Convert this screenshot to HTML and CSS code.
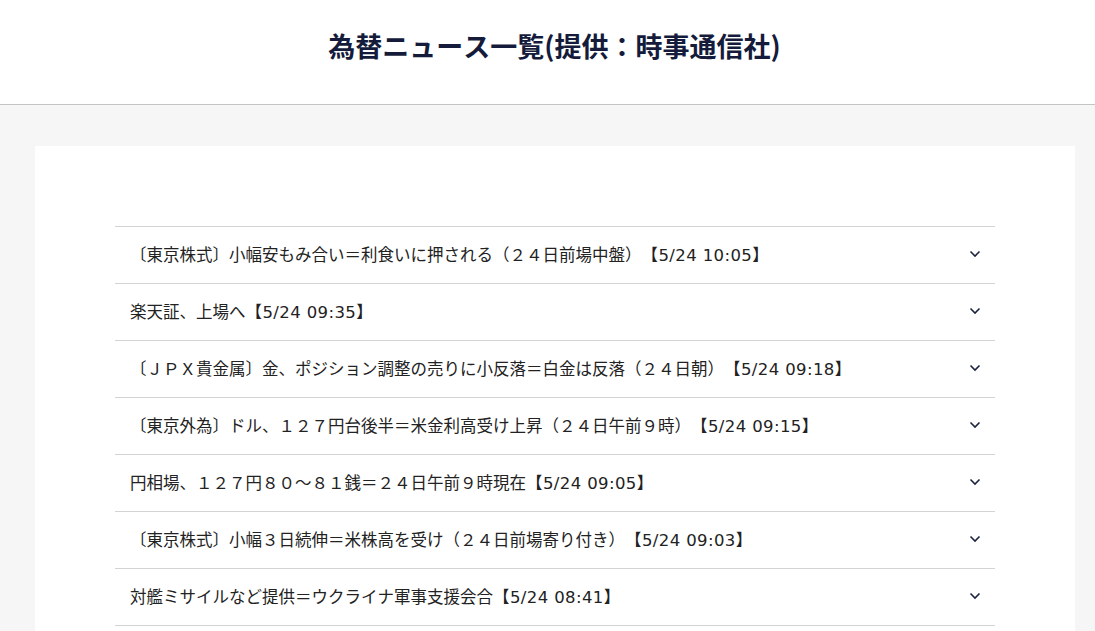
FILE: index.html
```html
<!DOCTYPE html>
<html lang="ja">
<head>
  <meta charset="UTF-8">
  <meta name="viewport" content="width=device-width, initial-scale=1.0">
  <title>為替ニュース一覧</title>
  <link rel="stylesheet" href="styles.css">
</head>
<body>
<header class="page-header">
  <h1>為替ニュース一覧(提供：時事通信社)</h1>
</header>

<main class="content">
  <section class="card">
    <ul class="news-list">
      <li class="news-item"><span>〔東京株式〕小幅安もみ合い＝利食いに押される（２４日前場中盤）<span class="stamp">【5/24 10:05】</span></span><svg class="chevron" viewBox="0 0 12 8"><path d="M1.5 1.5 6 6l4.5-4.5"/></svg></li>
      <li class="news-item"><span>楽天証、上場へ<span class="stamp">【5/24 09:35】</span></span><svg class="chevron" viewBox="0 0 12 8"><path d="M1.5 1.5 6 6l4.5-4.5"/></svg></li>
      <li class="news-item"><span>〔ＪＰＸ貴金属〕金、ポジション調整の売りに小反落＝白金は反落（２４日朝）<span class="stamp">【5/24 09:18】</span></span><svg class="chevron" viewBox="0 0 12 8"><path d="M1.5 1.5 6 6l4.5-4.5"/></svg></li>
      <li class="news-item"><span>〔東京外為〕ドル、１２７円台後半＝米金利高受け上昇（２４日午前９時）<span class="stamp">【5/24 09:15】</span></span><svg class="chevron" viewBox="0 0 12 8"><path d="M1.5 1.5 6 6l4.5-4.5"/></svg></li>
      <li class="news-item"><span>円相場、１２７円８０～８１銭＝２４日午前９時現在<span class="stamp">【5/24 09:05】</span></span><svg class="chevron" viewBox="0 0 12 8"><path d="M1.5 1.5 6 6l4.5-4.5"/></svg></li>
      <li class="news-item"><span>〔東京株式〕小幅３日続伸＝米株高を受け（２４日前場寄り付き）<span class="stamp">【5/24 09:03】</span></span><svg class="chevron" viewBox="0 0 12 8"><path d="M1.5 1.5 6 6l4.5-4.5"/></svg></li>
      <li class="news-item"><span>対艦ミサイルなど提供＝ウクライナ軍事支援会合<span class="stamp">【5/24 08:41】</span></span><svg class="chevron" viewBox="0 0 12 8"><path d="M1.5 1.5 6 6l4.5-4.5"/></svg></li>
    </ul>
  </section>
</main>
</body>
</html>
```

FILE: styles.css
```css
body {
  font-family: "Noto Sans CJK JP", "Noto Sans", sans-serif;
  margin: 0;
  background: #f6f6f6;
  color: #222;
  text-spacing-trim: space-all;
  font-kerning: none;
}
.page-header {
  background: #fff;
  height: 104px;
  border-bottom: 1px solid #c4c4c4;
  display: flex;
  align-items: center;
  justify-content: center;
}
.page-header h1 {
  margin: 0 0 14px 14px;
  font-size: 27px;
  font-weight: bold;
  color: #151b3b;
}
.content {
  padding: 41px 20px 0 35px;
}
.card {
  background: #fff;
  padding: 80px 80px 60px;
}
.news-list {
  list-style: none;
  margin: 0;
  padding: 0;
  border-top: 1px solid #d4d4d4;
}
.news-item {
  box-sizing: border-box;
  height: 57px;
  border-bottom: 1px solid #d4d4d4;
  display: flex;
  align-items: center;
  justify-content: space-between;
  padding: 0 14px 3px 15px;
  font-size: 16.5px;
}
.stamp {
  font-family: "DejaVu Sans", "Noto Sans CJK JP", sans-serif;
  letter-spacing: 0.4px;
}
.chevron {
  width: 12px;
  height: 8px;
  fill: none;
  stroke: #1c2340;
  stroke-width: 1.6;
}
```
